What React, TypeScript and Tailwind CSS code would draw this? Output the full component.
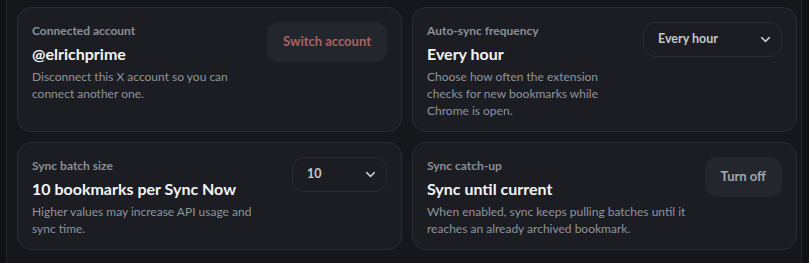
import { ChevronDown } from "lucide-react";
import type { ReactNode } from "react";

const font = { fontFamily: 'Lato, "Noto Sans", sans-serif' };

function SettingCard({
  label,
  title,
  desc,
  action,
}: {
  label: string;
  title: string;
  desc: string;
  action: ReactNode;
}) {
  return (
    <div className="flex items-start gap-4 rounded-[14px] border border-[#2a2d34] bg-[#1b1d23] px-[14px] pb-[12px] pt-[14px]">
      <div className="min-w-0 flex-1">
        <div className="text-[12px] font-bold leading-[18px] text-[#8b8f97]">{label}</div>
        <div className="mt-[3px] text-[16px] font-bold leading-[22px] text-[#f3f4f6]">{title}</div>
        <p className="mt-[3px] text-[12px] leading-[17px] text-[#8f949c]">{desc}</p>
      </div>
      {action}
    </div>
  );
}

function Select({ value, width }: { value: string; width: string }) {
  return (
    <div
      className={`flex h-[35px] shrink-0 items-center justify-between rounded-[12px] border border-[#2a2d34] bg-[#1b1d23] pl-[14px] pr-[8px] ${width}`}
    >
      <span className="text-[12.5px] font-bold text-[#c3c6cc]">{value}</span>
      <ChevronDown size={15} strokeWidth={2.5} className="text-[#c3c6cc]" />
    </div>
  );
}

function Button({ children, tone }: { children: ReactNode; tone: "red" | "gray" }) {
  return (
    <button
      type="button"
      className={`h-10 shrink-0 rounded-[12px] bg-[#23262c] px-4 text-[13px] font-bold ${
        tone === "red" ? "text-[#a86462]" : "text-[#a3a7ae]"
      }`}
    >
      {children}
    </button>
  );
}

export default function App() {
  return (
    <div className="flex h-[263px] w-[809px] bg-[#101114]" style={font}>
      <div className="ml-[6px] h-full w-[796px] border-x border-[#23252b] bg-[#15171b] pl-[10px] pr-[4px] pt-[7px]">
        <div className="grid grid-cols-2 gap-[10px]">
          <SettingCard
            label="Connected account"
            title="@elrichprime"
            desc="Disconnect this X account so you can connect another one."
            action={<Button tone="red">Switch account</Button>}
          />
          <SettingCard
            label="Auto-sync frequency"
            title="Every hour"
            desc="Choose how often the extension checks for new bookmarks while Chrome is open."
            action={<Select value="Every hour" width="w-[139px]" />}
          />
          <SettingCard
            label="Sync batch size"
            title="10 bookmarks per Sync Now"
            desc="Higher values may increase API usage and sync time."
            action={<Select value="10" width="w-[95px]" />}
          />
          <SettingCard
            label="Sync catch-up"
            title="Sync until current"
            desc="When enabled, sync keeps pulling batches until it reaches an already archived bookmark."
            action={<Button tone="gray">Turn off</Button>}
          />
        </div>
      </div>
    </div>
  );
}
